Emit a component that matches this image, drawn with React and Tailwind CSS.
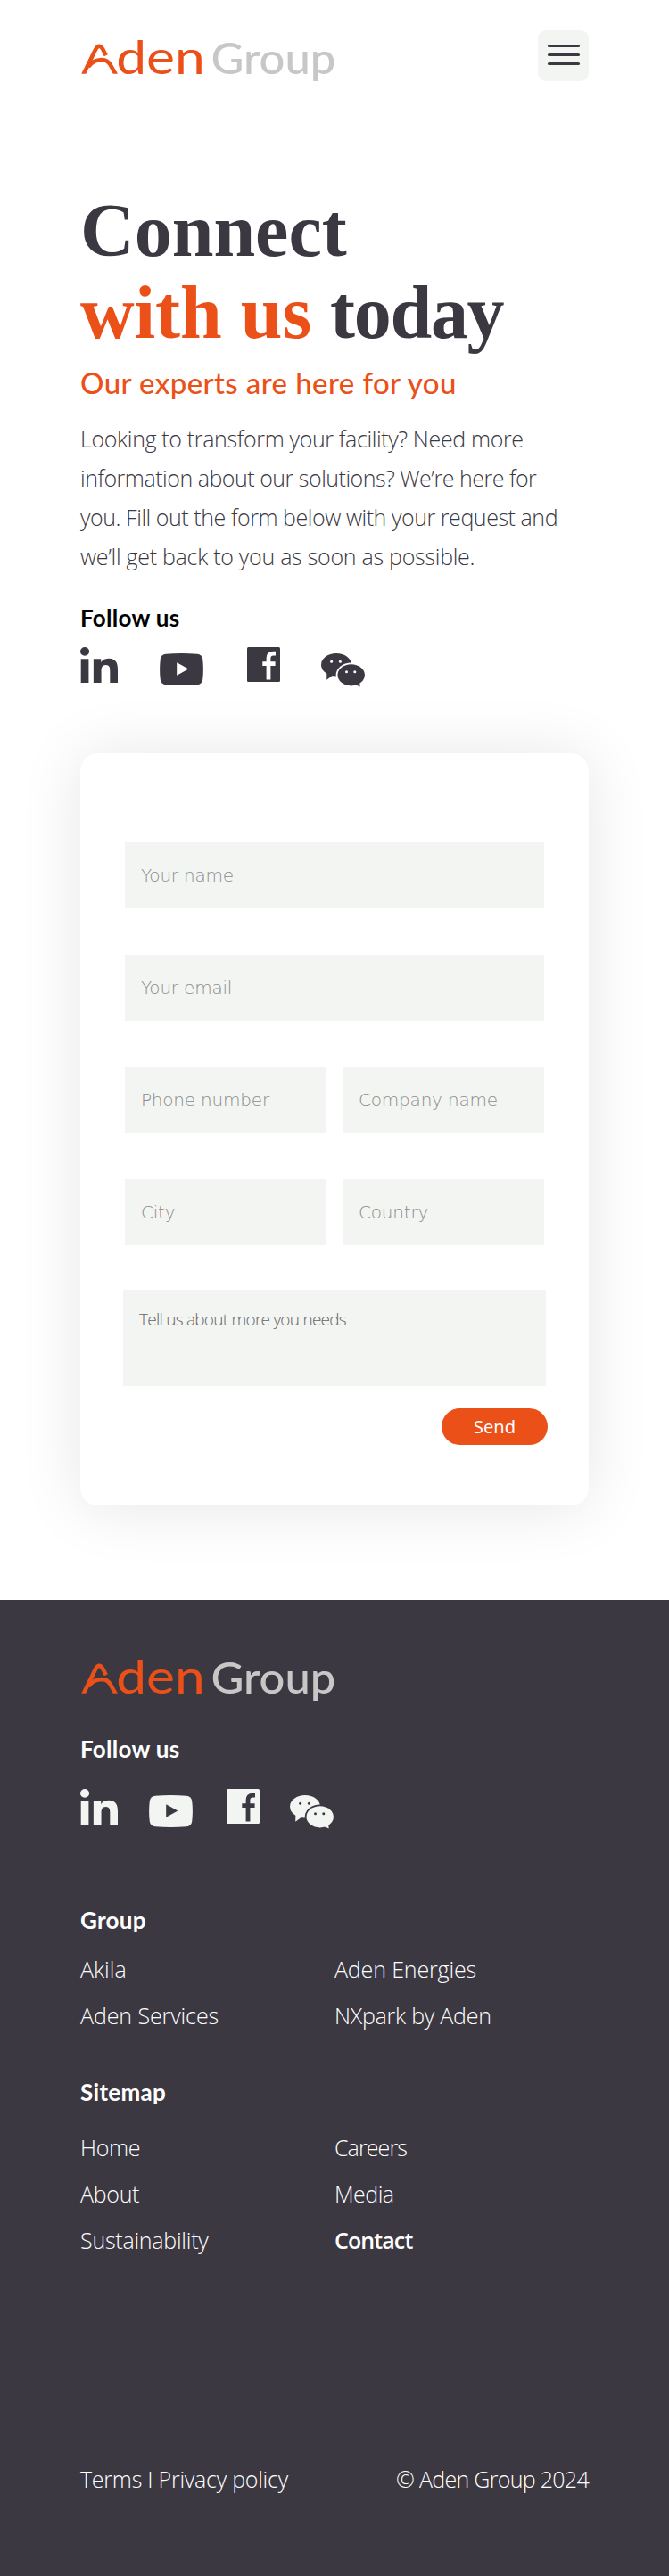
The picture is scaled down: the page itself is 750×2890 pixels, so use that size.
function Logo() {
  return (
    <svg width="290" height="62" viewBox="0 0 290 62" role="img" aria-label="Aden Group" className="overflow-visible">
      <svg width="48" height="46.8" viewBox="0 0 48 46.8" overflow="hidden">
        <g fill="none" stroke="#ec5019" strokeWidth="4.6">
          <path d="M2.700 49 L16.600 20.500 Q21 11.600 25.400 19.500 L28.800 26.200" />
          <path d="M9 39 Q14.500 31.200 24 31 Q30.600 31.200 33.800 36.800 L40.600 49" />
        </g>
      </svg>
      <text x="40.2" y="46.5" textLength="99.500" lengthAdjust="spacingAndGlyphs" fill="#ec5019" className="font-[Lato,sans-serif] text-[53px]">den</text>
      <text x="146.4" y="46.5" textLength="140" lengthAdjust="spacingAndGlyphs" fill="#c7c7c7" className="font-[Lato,sans-serif] text-[48px] font-medium">Group</text>
    </svg>
  );
}

function LinkedIn() {
  return (
    <svg width="42" height="40" viewBox="0 0 448 448" preserveAspectRatio="none" fill="currentColor" className="shrink-0">
      <path d="M100.28 448H7.4V148.9h92.88zM53.79 108.1C24.09 108.1 0 83.5 0 53.8a53.79 53.79 0 0 1 107.58 0c0 29.7-24.1 54.3-53.79 54.3zM447.9 448h-92.68V302.4c0-34.7-.7-79.2-48.29-79.2-48.29 0-55.69 37.7-55.69 76.7V448h-92.78V148.9h89.08v40.8h1.3c12.4-23.5 42.69-48.3 87.88-48.3 94 0 111.28 61.9 111.28 142.3V448z" />
    </svg>
  );
}

function YouTube({ hole }) {
  return (
    <svg width="49" height="36" viewBox="0 0 49 36" fill="currentColor" className="mt-[7px] shrink-0">
      <path d="M7 .8 Q24.500 -.6 42 .8 Q47.400 1.300 48.200 6.500 Q49.600 18 48.200 29.500 Q47.400 34.700 42 35.200 Q24.500 36.600 7 35.200 Q1.600 34.700 .8 29.500 Q-.6 18 .8 6.500 Q1.600 1.300 7 .8Z" />
      <path d="M19.200 10.200 L32.300 17.500 L19.200 24.800Z" fill={hole} />
    </svg>
  );
}

function Facebook({ hole }) {
  return (
    <svg width="37" height="39" viewBox="0 0 37 39" fill="currentColor" className="shrink-0">
      <rect width="37" height="39" rx="1.5" />
      <path d="M32 7.200 H29.500 Q24 7.200 24 12.500 V36.400 M17.300 18.600 H31.600" fill="none" stroke={hole} strokeWidth="4.800" />
    </svg>
  );
}

function WeChat({ hole }) {
  return (
    <svg width="49" height="38" viewBox="0 0 49 38" fill="currentColor" className="mt-[7px] shrink-0">
      <ellipse cx="17" cy="12.800" rx="17" ry="12.800" />
      <path d="M6.500 20 L6.200 29.800 L14 24Z" />
      <ellipse cx="33.700" cy="24.300" rx="17" ry="13.800" fill={hole} />
      <ellipse cx="33.700" cy="24.300" rx="15.200" ry="12.100" />
      <path d="M36 34 L43.700 37.600 L43 31Z" />
      <g fill={hole}>
        <circle cx="11.600" cy="9.200" r="1.500" />
        <circle cx="21.400" cy="9.200" r="1.500" />
        <circle cx="28.500" cy="20.800" r="1.500" />
        <circle cx="37.800" cy="20.800" r="1.500" />
      </g>
    </svg>
  );
}

const field =
  "block h-[74px] w-full min-w-0 rounded-none bg-[#f3f5f2] px-[18px] font-['DejaVu_Sans',sans-serif] text-[20px] font-extralight tracking-[-0.2px] text-black outline-none placeholder:text-[#8c8c8c] placeholder:opacity-100";
const label = "pb-[2px] font-[Lato,sans-serif] text-[26px] leading-[38px] font-bold tracking-[0.3px]";

export default function App() {
  return (
    <div className="min-h-[2890px] w-[750px] bg-white font-['Open_Sans',sans-serif] text-[#3b3842]">
      <header className="flex items-start justify-between px-[90px] pt-[34px]">
        <div className="pt-[2px]">
          <Logo />
        </div>
        <button aria-label="Menu" className="flex h-[57px] w-[57px] flex-col items-center gap-[7px] rounded-[9px] bg-[#f3f5f2] pt-[16px]">
          <span className="h-[3px] w-[36px] rounded-full bg-[#3b3842]" />
          <span className="h-[3px] w-[36px] rounded-full bg-[#3b3842]" />
          <span className="h-[3px] w-[36px] rounded-full bg-[#3b3842]" />
        </button>
      </header>

      <main className="px-[90px] pt-[115px]">
        <h1 className="font-['Liberation_Serif',serif] text-[84px] leading-[92px] font-bold whitespace-nowrap">
          Connect
          <br />
          <span className="text-[#ec5019]">with us</span> <span className="tracking-[-1.3px]">today</span>
        </h1>
        <h2 className="mt-[10px] pb-[3px] font-[Lato,sans-serif] text-[33px] leading-[45px] font-medium tracking-[0.4px] text-[#ec5019]">
          Our experts are here for you
        </h2>
        <p className="mt-[15px] text-[25px] leading-[44px] font-light whitespace-nowrap">
          <span className="tracking-[-0.35px]">Looking to transform your facility? Need more</span>
          <br />
          <span className="tracking-[-0.49px]">information about our solutions? We’re here for</span>
          <br />
          <span className="tracking-[-0.45px]">you. Fill out the form below with your request and</span>
          <br />
          <span className="tracking-[-0.28px]">we’ll get back to you as soon as possible.</span>
        </p>
        <p className={`mt-[28px] text-black ${label}`}>Follow us</p>
        <div className="mt-[12px] flex h-[44px] items-start">
          <LinkedIn />
          <div className="ml-[47px]"><YouTube hole="#fff" /></div>
          <div className="ml-[49px]"><Facebook hole="#fff" /></div>
          <div className="ml-[46px]"><WeChat hole="#fff" /></div>
        </div>

        <form className="mt-[75px] h-[844px] rounded-[20px] bg-white px-[50px] pt-[100px] shadow-[0_2px_70px_rgba(0,0,0,0.1)]">
          <div className="grid gap-[52px]">
            <input className={field} placeholder="Your name" />
            <input className={field} placeholder="Your email" />
            <div className="grid grid-cols-[225px_226px] gap-[19px]">
              <input className={field} placeholder="Phone number" />
              <input className={field} placeholder="Company name" />
            </div>
            <div className="grid grid-cols-[225px_226px] gap-[19px]">
              <input className={field} placeholder="City" />
              <input className={field} placeholder="Country" />
            </div>
          </div>
          <textarea
            className="mt-[50px] -ml-[2px] block h-[108px] w-[474px] resize-none bg-[#f3f5f2] px-[18px] pt-[19px] text-[19px] leading-[28px] font-light tracking-[-0.75px] outline-none placeholder:text-[#666] placeholder:opacity-100"
            placeholder="Tell us about more you needs"
          />
          <div className="-mr-[4px] mt-[25px] flex justify-end">
            <button type="button" className="h-[41px] w-[119px] rounded-full bg-[#ec5019] font-['Noto_Sans',sans-serif] text-[20px] leading-[41px] text-white">
              Send
            </button>
          </div>
        </form>
      </main>

      <footer className="mt-[106px] h-[1095px] bg-[#3b3842] px-[90px] pt-[58px] text-white">
        <Logo />
        <p className={`mt-[28px] ${label}`}>Follow us</p>
        <div className="mt-[24px] flex h-[44px] items-start text-[#f3f5f2]">
          <LinkedIn />
          <div className="ml-[35px]"><YouTube hole="#3b3842" /></div>
          <div className="ml-[38px]"><Facebook hole="#3b3842" /></div>
          <div className="ml-[34px]"><WeChat hole="#3b3842" /></div>
        </div>
        <h3 className={`mt-[84px] ${label}`}>Group</h3>
        <div className="mt-[8px] grid grid-cols-2 text-[25px] leading-[52px] font-light">
          <a>Akila</a>
          <a className="tracking-[-0.15px]">Aden Energies</a>
          <a className="tracking-[-0.1px]">Aden Services</a>
          <a className="tracking-[-0.25px]">NXpark by Aden</a>
        </div>
        <h3 className={`mt-[41px] ${label}`}>Sitemap</h3>
        <div className="mt-[15px] grid grid-cols-2 text-[25px] leading-[52px] font-light">
          <a className="tracking-[-0.3px]">Home</a>
          <a className="tracking-[-0.9px]">Careers</a>
          <a className="tracking-[-0.3px]">About</a>
          <a className="tracking-[-0.5px]">Media</a>
          <a className="tracking-[-0.25px]">Sustainability</a>
          <a className="font-semibold tracking-[-0.9px]">Contact</a>
        </div>
        <div className="mt-[216px] flex justify-between text-[25px] leading-[52px] font-light">
          <span className="tracking-[-0.25px]">Terms I Privacy policy</span>
          <span className="tracking-[-0.7px]">© Aden Group 2024</span>
        </div>
      </footer>
    </div>
  );
}
